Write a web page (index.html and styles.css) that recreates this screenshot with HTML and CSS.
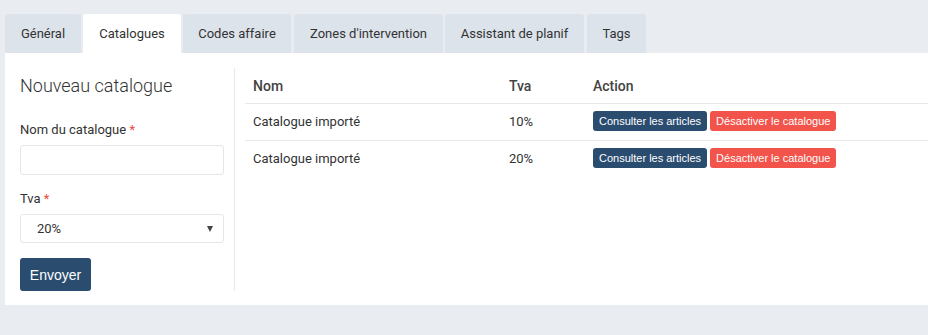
FILE: index.html
```html
<!DOCTYPE html>
<html lang="fr">
<head>
<meta charset="utf-8">
<link rel="stylesheet" href="styles.css">
</head>
<body>
<div class="page">
  <nav class="tabs">
    <div class="tab">Général</div>
    <div class="tab active">Catalogues</div>
    <div class="tab">Codes affaire</div>
    <div class="tab">Zones d'intervention</div>
    <div class="tab">Assistant de planif</div>
    <div class="tab">Tags</div>
  </nav>
  <main class="panel">
    <section class="form-col">
      <h2 class="title">Nouveau catalogue</h2>
      <label class="label">Nom du catalogue <span class="req">*</span></label>
      <div class="input"></div>
      <label class="label">Tva <span class="req">*</span></label>
      <div class="select"><span>20%</span><span class="caret"></span></div>
      <button class="btn-submit">Envoyer</button>
    </section>
    <section class="table-col">
      <div class="row head">
        <div class="c-nom">Nom</div>
        <div class="c-tva">Tva</div>
        <div class="c-act">Action</div>
      </div>
      <div class="row">
        <div class="c-nom">Catalogue importé</div>
        <div class="c-tva">10%</div>
        <div class="c-act"><span class="btn blue">Consulter les articles</span><span class="btn red">Désactiver le catalogue</span></div>
      </div>
      <div class="row">
        <div class="c-nom">Catalogue importé</div>
        <div class="c-tva">20%</div>
        <div class="c-act"><span class="btn blue">Consulter les articles</span><span class="btn red">Désactiver le catalogue</span></div>
      </div>
    </section>
  </main>
</div>
</body>
</html>
```
FILE: styles.css
```css
* { box-sizing: border-box; }
html, body { margin: 0; padding: 0; }
body {
  background: #e9edf2;
  font-family: Roboto, "Liberation Sans", sans-serif;
  color: #333;
  width: 928px;
  height: 335px;
  overflow: hidden;
}
.page { padding: 14px 0 0 5px; }
.tabs { display: flex; gap: 2px; height: 39px; }
.tab {
  background: #dce3eb;
  border-radius: 3px 3px 0 0;
  padding: 0;
  text-align: center;
  white-space: nowrap;
  font-size: 13px;
  line-height: 39px;
  color: #333;
  flex: none;
}
.tab:nth-child(1) { width: 76px; }
.tab:nth-child(2) { width: 98px; }
.tab:nth-child(3) { width: 108px; }
.tab:nth-child(4) { width: 149px; margin-left: 1px; }
.tab:nth-child(5) { width: 139px; }
.tab:nth-child(6) { width: 59px; margin-left: 1px; }
.tab.active { background: #fff; }
.panel {
  background: #fff;
  display: flex;
  height: 252px;
  padding: 15px 0 14px 0;
}
.form-col {
  width: 230px;
  padding: 0 10px 0 15px;
  border-right: 1px solid #e8e8e8;
  display: flex;
  flex-direction: column;
}
.title {
  margin: 6px 0 0;
  font-size: 18px;
  font-weight: 300;
  color: #333;
  line-height: 24px;
}
.label { font-size: 13px; line-height: 16px; color: #333; }
.label + .input, .label + .select { margin-top: 7px; }
.title + .label { margin-top: 24px; }
.input + .label { margin-top: 16px; }
.req { color: #e74c3c; }
.input, .select {
  height: 30px;
  border: 1px solid #e6e6e6;
  border-radius: 3px;
}
.select {
  display: flex;
  align-items: center;
  justify-content: space-between;
  padding: 0 10px 0 16px;
  font-size: 13px;
  color: #333;
}
.caret {
  width: 0; height: 0;
  border-left: 3.5px solid transparent;
  border-right: 3.5px solid transparent;
  border-top: 6px solid #444;
}
.btn-submit {
  margin-top: 15px;
  width: 71px;
  height: 33px;
  background: #2a4c6f;
  color: #fff;
  border: 0;
  border-radius: 3px;
  font-family: "Liberation Sans", Arial, sans-serif;
  font-size: 14px;
  padding: 0;
}
.table-col { flex: 1; padding-left: 10px; }
.row {
  display: flex;
  align-items: center;
  height: 37px;
  padding-bottom: 2px;
  border-top: 1px solid #e8e8e8;
  font-size: 13px;
}
.row.head {
  border-top: 0;
  height: 35px;
  padding-bottom: 0;
  font-weight: 500;
  font-size: 14px;
  color: #444;
}
.c-nom { width: 256px; padding-left: 8px; }
.c-tva { width: 84px; padding-left: 8px; }
.c-act { flex: 1; padding-left: 8px; display: flex; gap: 3px; }
.btn {
  font-family: "Liberation Sans", Arial, sans-serif;
  font-size: 11px;
  color: #fff;
  height: 20px;
  line-height: 20px;
  padding: 0 6px;
  border-radius: 3px;
}
.btn.blue { background: #2a4c6f; }
.btn.red { background: #f2534a; }
```
